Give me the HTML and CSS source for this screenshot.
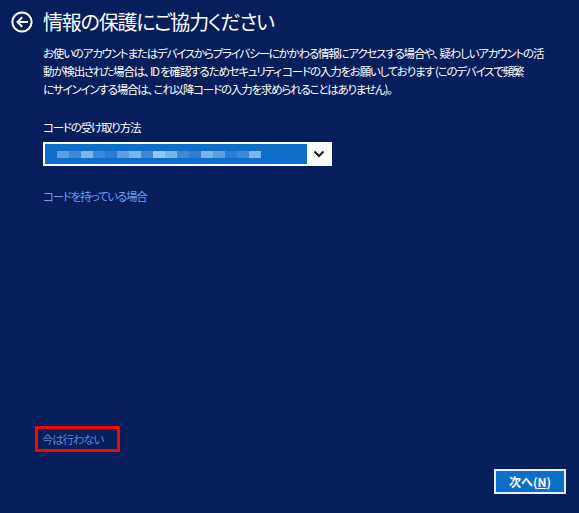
FILE: index.html
```html
<!DOCTYPE html>
<html lang="ja">
<head>
<meta charset="utf-8">
<link rel="stylesheet" href="styles.css">
</head>
<body>
<div class="page">
  <div class="header">
    <svg class="back" width="22" height="22" viewBox="0 0 22 22">
      <circle cx="11" cy="11" r="9.6" fill="none" stroke="#fff" stroke-width="2"/>
      <path d="M16 11H7M10.5 7L6.5 11l4 4" fill="none" stroke="#fff" stroke-width="2" stroke-linecap="square"/>
    </svg>
    <h1 class="title">情報の保護にご協力ください</h1>
  </div>
  <p class="desc">お使いのアカウントまたはデバイスからプライバシーにかかわる情報にアクセスする場合や、 疑わしいアカウントの活<br>動が検出された場合は、 ID を確認するためセキュリティ コードの入力をお願いしております (このデバイスで頻繁<br>にサインインする場合は、 これ以降コードの入力を求められることはありません)。</p>
  <div class="label">コードの受け取り方法</div>
  <div class="select">
    <div class="selected">
      <span class="px p1"></span><span class="px p2"></span><span class="px p3"></span><span class="px p2"></span><span class="px p4"></span><span class="px p1"></span><span class="px p3"></span><span class="px p2"></span><span class="px p5"></span><span class="px p3"></span><span class="px p2"></span><span class="px p4"></span><span class="px p3"></span><span class="px p1"></span><span class="px p4"></span><span class="px p2"></span><span class="px p3"></span>
    </div>
    <div class="chev">
      <svg width="12" height="8" viewBox="0 0 12 8"><path d="M1.5 1.5L6 6l4.5-4.5" fill="none" stroke="#111" stroke-width="2"/></svg>
    </div>
  </div>
  <a class="link">コードを持っている場合</a>
  <div class="footer">
    <a class="later">今は行わない</a>
    <div class="actions">
      <button class="next">次へ(<u>N</u>)</button>
    </div>
  </div>
</div>
</body>
</html>
```
FILE: styles.css
```css
html, body {
  margin: 0;
  padding: 0;
}
body {
  background: #061f5c;
  color: #fff;
  font-family: "Noto Sans CJK JP", "Noto Sans", sans-serif;
  font-feature-settings: "palt";
}
.page {
  width: 579px;
  height: 513px;
  box-sizing: border-box;
  padding: 7px 13px 19px 43px;
  display: flex;
  flex-direction: column;
}
.header {
  display: flex;
  align-items: center;
  margin-left: -32px;
  gap: 10px;
  height: 30px;
}
.back {
  flex: none;
}
.title {
  margin: 0;
  font-size: 20px;
  font-weight: 400;
  line-height: 30px;
  letter-spacing: -1.2px;
}
.desc {
  margin: 7px 0 0;
  font-size: 11.5px;
  line-height: 18px;
  white-space: nowrap;
  letter-spacing: -1.2px;
}
.label {
  margin-top: 20px;
  font-size: 11.5px;
  line-height: 18px;
  letter-spacing: -1.2px;
}
.select {
  margin-top: 6px;
  width: 289px;
  height: 24px;
  box-sizing: border-box;
  background: #fff;
  border: 1px solid #fff;
  padding: 1px;
  display: flex;
}
.selected {
  width: 262px;
  background: #0e6fcb;
  display: flex;
  align-items: center;
  padding-left: 12px;
  box-sizing: border-box;
  gap: 0;
}
.px {
  height: 7px;
  width: 12px;
  display: block;
}
.p1 { background: #5aa0e0; }
.p2 { background: #3a8ad8; }
.p3 { background: #7ab4e8; }
.p4 { background: #2a7ed2; }
.p5 { background: #95c4ee; }
.chev {
  flex: 1;
  display: flex;
  align-items: center;
  justify-content: center;
}
.link {
  margin-top: 21px;
  font-size: 11.5px;
  line-height: 18px;
  letter-spacing: -1.2px;
  color: #6e9df0;
  align-self: flex-start;
}
.footer {
  margin-top: auto;
  display: flex;
  flex-direction: column;
}
.later {
  align-self: flex-start;
  margin-left: -8px;
  border: 3px solid #ff0000;
  padding: 4px 14px 3px 4px;
  font-size: 11.5px;
  letter-spacing: -1.2px;
  line-height: 13px;
  color: #5b86d8;
}
.actions {
  display: flex;
  justify-content: flex-end;
  margin-top: 17px;
}
.next {
  width: 72px;
  height: 25px;
  background: #0c6fca;
  border: 2px solid #e8eef8;
  color: #fff;
  font-family: "Noto Sans CJK JP", "Noto Sans", sans-serif;
  font-weight: 700;
  font-size: 12px;
  padding: 0;
  line-height: 19px;
}
```
